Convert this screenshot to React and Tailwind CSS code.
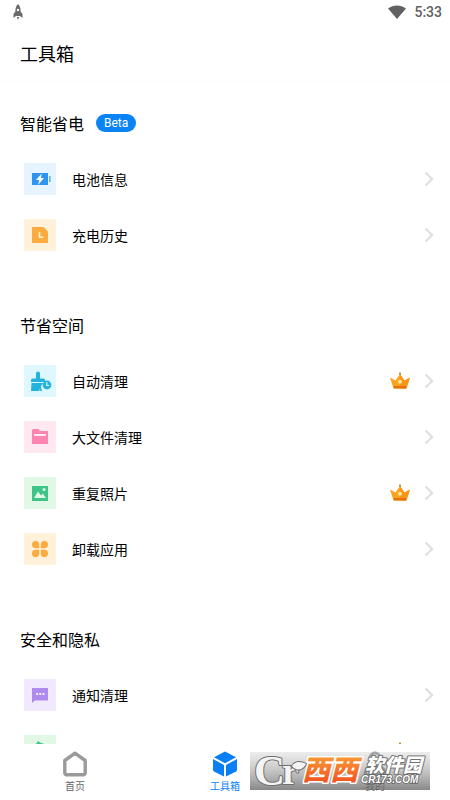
import clsx from "clsx";

const BatteryIcon = () => (
  <svg viewBox="0 0 32 32" className="size-8" aria-hidden="true">
    <path d="M8 10h16v12H8z" fill="#2d94ef" />
    <path d="M25 13h1.600v6H25z" fill="#5fb0f5" />
    <path d="M17.800 10.500l-6 6.500h3.400l-1.200 5 6-7h-3.200z" fill="#fff" />
  </svg>
)

const HistoryIcon = () => (
  <svg viewBox="0 0 32 32" className="size-8" aria-hidden="true">
    <path d="M8 8h11.500l4.500 4.500V24H8z" fill="#fbab3f" />
    <path d="M15.500 13v5.200h3.800" fill="none" stroke="#fff3d8" strokeWidth="1.600" />
  </svg>
)

const BrushIcon = () => (
  <svg viewBox="0 0 32 32" className="size-8" aria-hidden="true">
    <path d="M12 8.500a2 2 0 0 1 4 0V13.500h3.500a1.500 1.500 0 0 1 1.500 1.500v2H7v-2a1.500 1.500 0 0 1 1.500-1.500H12z" fill="#24b3dd" />
    <path d="M7.500 18h12a5 5 0 0 0-1.500 7.400V26h-1.500l-1-2.500V26H7z" fill="#24b3dd" />
    <circle cx="23" cy="20" r="4.400" fill="#24b3dd" />
    <path d="M22.800 17.300v3.200h2.400" fill="none" stroke="#dff8ff" strokeWidth="1.200" />
  </svg>
)

const FolderIcon = () => (
  <svg viewBox="0 0 32 32" className="size-8" aria-hidden="true">
    <path d="M8 9l1-1h5.500l1.500 2h8v13H8z" fill="#fc84ae" />
    <path d="M10 13h12v2H10z" fill="#ffeaf1" />
  </svg>
)

const PhotoIcon = () => (
  <svg viewBox="0 0 32 32" className="size-8" aria-hidden="true">
    <path d="M8 9h16v15H8z" fill="#3dc486" />
    <path d="M10 21l4-6.500 3 4 1.700-2L22 21z" fill="#e3fae9" />
    <circle cx="20" cy="12.500" r="1.600" fill="#e3fae9" />
  </svg>
)

const CloverIcon = () => (
  <svg viewBox="0 0 32 32" className="size-8" fill="#fbab3f" aria-hidden="true">
    <path d="M11.600 8a3.600 3.600 0 0 1 3.600 3.600v3.600h-3.600a3.600 3.600 0 0 1 0-7.200z" />
    <path d="M20.400 8a3.600 3.600 0 0 0-3.600 3.600v3.600h3.600a3.600 3.600 0 0 0 0-7.200z" />
    <path d="M11.600 24a3.600 3.600 0 0 0 3.600-3.600v-3.600h-3.600a3.600 3.600 0 0 0 0 7.200z" />
    <path d="M20.400 24a3.600 3.600 0 0 1-3.600-3.600v-3.600h3.600a3.600 3.600 0 0 1 0 7.200z" />
  </svg>
)

const MessageIcon = () => (
  <svg viewBox="0 0 32 32" className="size-8" aria-hidden="true">
    <path d="M8 9h16v12.500H11L8 24z" fill="#b08bee" />
    <path d="M12 14h2v2h-2zM15.200 14h2v2h-2zM18.400 14h2v2h-2z" fill="#f5edff" />
  </svg>
)

const ShieldIcon = () => (
  <svg viewBox="0 0 32 32" className="size-8" aria-hidden="true">
    <path d="M14 6l2 1.500 7 2.500v6c0 4-3 7-7 9-4-2-7-5-7-9v-6l3.500-1.500z" fill="#3dc486" />
  </svg>
)

const Crown = () => (
  <svg viewBox="0 0 20 18" className="h-[18px] w-5" aria-hidden="true">
    <path d="M0 5.500l5.500 3L10 2l4.500 6.500 5.500-3-3.500 11h-13z" fill="#fba31c" />
    <path d="M10 2l4.500 6.500 5.500-3-3.500 11H10z" fill="#f68a12" opacity=".6" />
    <path d="M3.800 14h12.400v2.500H3.800z" fill="#e9710c" />
    <circle cx="10" cy="1.700" r="1.100" fill="#b9822e" />
    <circle cx="10" cy="9.700" r="2" fill="#ffe9a3" />
  </svg>
)

const Chevron = () => (
  <svg viewBox="0 0 10 16" className="h-4 w-[10px]" aria-hidden="true">
    <path d="M1.500 1.500L8 8l-6.500 6.500" fill="none" stroke="#e0e0e0" strokeWidth="2.400" />
  </svg>
)

const sections = [
  {
    title: '智能省电',
    badge: 'Beta',
    items: [
      { label: '电池信息', icon: BatteryIcon, tint: 'bg-[#e5f4ff]' },
      { label: '充电历史', icon: HistoryIcon, tint: 'bg-[#fff1da]' },
    ],
  },
  {
    title: '节省空间',
    items: [
      { label: '自动清理', icon: BrushIcon, tint: 'bg-[#dff8ff]', premium: true },
      { label: '大文件清理', icon: FolderIcon, tint: 'bg-[#ffe8ef]' },
      { label: '重复照片', icon: PhotoIcon, tint: 'bg-[#e0f8e5]', premium: true },
      { label: '卸载应用', icon: CloverIcon, tint: 'bg-[#fff1da]' },
    ],
  },
  {
    title: '安全和隐私',
    items: [
      { label: '通知清理', icon: MessageIcon, tint: 'bg-[#f1eaff]' },
      { label: '', icon: ShieldIcon, tint: 'bg-[#e0f8e5]', premium: true },
    ],
  },
]

const StatusBar = () => (
  <div className="flex h-6 shrink-0 items-center justify-between pl-[13px] pr-2 text-[#616161]">
    <svg viewBox="0 0 10 18" className="h-[18px] w-[10px]" fill="#6b6b6b" aria-hidden="true">
      <path d="M5 1c2 2 2.800 4.500 2.600 7.500L9.500 11v4L7 13H3L.5 15v-4l1.900-2.500C2.200 5.500 3 3 5 1z" />
      <path d="M3.800 14h2.400L5 17z" />
      <circle cx="5" cy="7" r="1.200" fill="#fff" />
    </svg>
    <div className="flex items-center gap-2">
      <svg viewBox="0 0 18 14" className="h-[14px] w-[18px]" aria-hidden="true">
        <path d="M0 3.500C5.500-.6 12.500-.6 18 3.500L9 14z" fill="#616161" />
      </svg>
      <span className="font-[Roboto] text-sm font-medium">5:33</span>
    </div>
  </div>
)

const ToolRow = ({ item }) => (
  <li>
    <button type="button" className="flex h-14 w-full items-center pl-6 pr-4 text-left">
      <span className={clsx('size-8 shrink-0', item.tint)}>
        <item.icon />
      </span>
      <span className="ml-4 flex-1 text-sm">{item.label}</span>
      {item.premium && <Crown />}
      <span className="ml-[14px]">
        <Chevron />
      </span>
    </button>
  </li>
)

const Section = ({ title, badge, items }) => (
  <section>
    <div className="flex h-14 items-center gap-3 px-5">
      <h2 className="text-base">{title}</h2>
      {badge && (
        <span className="rounded-full bg-[#0a84f5] px-2 font-[Roboto] text-xs leading-[18px] text-white">{badge}</span>
      )}
    </div>
    <ul>
      {items.map((item, i) => (
        <ToolRow key={i} item={item} />
      ))}
    </ul>
  </section>
)

const HomeIcon = () => (
  <svg viewBox="0 0 26 26" className="size-[26px]" aria-hidden="true">
    <path d="M13 2.200L23.200 9.500V22a1.800 1.800 0 0 1-1.800 1.800H4.600A1.800 1.800 0 0 1 2.800 22V9.500z" fill="none" stroke="#9a9a9a" strokeWidth="3.400" strokeLinejoin="round" />
  </svg>
)

const CubeIcon = () => (
  <svg viewBox="0 0 26 26" className="size-[26px]" fill="#0a7ff5" aria-hidden="true">
    <path d="M13 .5l11 5.700-11 6-11-6z" />
    <path d="M1 8l11 6v11.500L2 20.500a2 2 0 0 1-1-1.700z" />
    <path d="M25 8l-11 6v11.500l10-5a2 2 0 0 0 1-1.700z" />
  </svg>
)

const UserIcon = () => (
  <svg viewBox="0 0 26 26" className="size-[26px]" fill="none" stroke="#8a8a8a" strokeWidth="3" aria-hidden="true">
    <circle cx="13" cy="7" r="5" />
    <path d="M3 24c0-7 4-9 10-9s10 2 10 9z" />
  </svg>
)

const tabs = [
  { label: '首页', icon: HomeIcon },
  { label: '工具箱', icon: CubeIcon, active: true },
  { label: '我的', icon: UserIcon },
]

const Watermark = () => (
  <svg viewBox="0 0 180 38" className="pointer-events-none absolute bottom-[10px] right-5 h-[38px] w-[180px] overflow-visible" aria-hidden="true">
    <defs>
      <linearGradient id="plate" x1="0" y1="0" x2="0" y2="1">
        <stop offset="0" stopColor="#d0d0d0" stopOpacity=".4" />
        <stop offset="1" stopColor="#606060" stopOpacity=".75" />
      </linearGradient>
      <linearGradient id="flame" x1="0" y1="0" x2="0" y2="1">
        <stop offset="0" stopColor="#fbb03b" />
        <stop offset="1" stopColor="#f0441c" />
      </linearGradient>
    </defs>
    <rect width="180" height="38" fill="url(#plate)" />
    <g fill="#f4f4f4" stroke="#707070" strokeWidth="2" paintOrder="stroke" strokeLinejoin="round">
      <text x="4" y="33" fontFamily="Liberation Serif, serif" fontWeight="700" fontSize="43">C</text>
      <text x="32" y="32" fontFamily="Liberation Serif, serif" fontWeight="700" fontSize="38">r</text>
      <path d="M42 14c3-5 9-5 14-2-3 6-9 8-14 2z" />
    </g>
    <g fontFamily="Noto Sans CJK SC, sans-serif" fontStyle="italic" fontWeight="900" paintOrder="stroke" strokeLinejoin="round">
      <text x="52" y="28" fontSize="28" fill="url(#flame)" stroke="#fff" strokeWidth="3">西西</text>
      <text x="115" y="20" fontSize="19" fill="#fff" stroke="#707070" strokeWidth="2">软件园</text>
    </g>
    <text x="111" y="31" fontFamily="Liberation Sans, sans-serif" fontStyle="italic" fontWeight="700" fontSize="10" fill="#fff" stroke="#606060" strokeWidth="1.500" paintOrder="stroke">CR173.COM</text>
  </svg>
)

const TabBar = () => (
  <nav className="relative flex h-14 shrink-0 bg-white">
    {tabs.map((tab) => (
      <button
        key={tab.label}
        type="button"
        className={clsx(
          'flex flex-1 flex-col items-center justify-center gap-px text-[10px] leading-4',
          tab.active ? 'text-[#0a7ff5]' : 'text-[#666]',
        )}
      >
        <tab.icon />
        {tab.label}
      </button>
    ))}
    <Watermark />
  </nav>
)

const App = () => (
  <div className="flex h-screen flex-col bg-white font-['Noto_Sans_CJK_SC',sans-serif] text-black">
    <StatusBar />
    <header className="flex h-[58px] shrink-0 items-center border-b border-[#fcfcfc] px-5">
      <h1 className="text-lg">工具箱</h1>
    </header>
    <main className="flex min-h-0 flex-1 flex-col gap-[34px] overflow-hidden pt-[13px]">
      {sections.map((section) => (
        <Section key={section.title} {...section} />
      ))}
    </main>
    <TabBar />
  </div>
)

export default App;
